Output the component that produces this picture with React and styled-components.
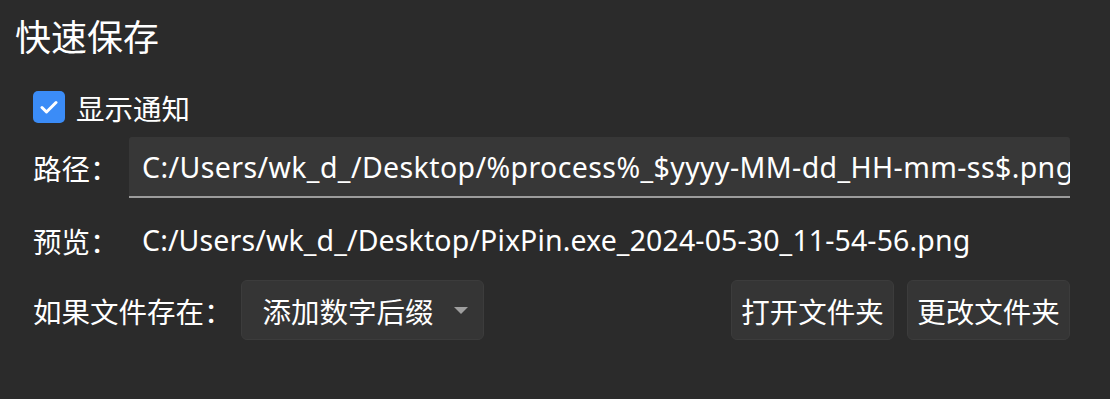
import styled, { createGlobalStyle } from "styled-components";

const GlobalStyle = createGlobalStyle`
  html, body {
    margin: 0;
    background: #2b2b2b;
  }
  body {
    font-family: "Noto Sans", "Noto Sans CJK SC", sans-serif;
    color: #ffffff;
  }
`;

const Page = styled.div`
  width: 1110px;
  height: 399px;
  padding: 16px 40px 0 15px;
  box-sizing: border-box;
  background: #2b2b2b;
`;

const Title = styled.h1`
  margin: 0;
  font-size: 36px;
  font-weight: 400;
  line-height: 44px;
`;

const Body = styled.div`
  padding-left: 18px;
  display: flex;
  flex-direction: column;
`;

const CheckRow = styled.label`
  display: flex;
  align-items: center;
  gap: 11px;
  margin-top: 31px;
  font-size: 28.5px;
  height: 32px;
`;

const Box = styled.span`
  width: 32px;
  height: 32px;
  border-radius: 5px;
  background: #3b8cf7;
  display: flex;
  align-items: center;
  justify-content: center;
`;

const Row = styled.div`
  display: flex;
  align-items: center;
  margin-top: ${({ $gap }) => $gap}px;
  height: ${({ $h }) => $h}px;
  font-size: 28.5px;
`;

const Label = styled.span`
  width: 96px;
  flex-shrink: 0;
`;

const PathField = styled.div`
  flex: 1;
  min-width: 0;
  height: 61px;
  box-sizing: border-box;
  background: #373737;
  border-bottom: 2px solid #9c9c9c;
  border-radius: 3px 3px 0 0;
  padding: 0 0 0 13px;
  display: flex;
  align-items: center;
  overflow: hidden;
  white-space: nowrap;
  letter-spacing: 0.4px;
`;

const PreviewText = styled.span`
  padding-left: 13px;
  white-space: nowrap;
  letter-spacing: 0.12px;
`;

const Select = styled.div`
  width: 243px;
  height: 60px;
  box-sizing: border-box;
  margin-left: 8px;
  background: #353535;
  border: 1px solid #3c3c3c;
  border-radius: 6px;
  display: flex;
  align-items: center;
  justify-content: space-between;
  padding: 0 15px 0 21px;
`;

const Caret = styled.span`
  width: 0;
  height: 0;
  border-left: 7px solid transparent;
  border-right: 7px solid transparent;
  border-top: 7px solid #9e9e9e;
`;

const Spacer = styled.div`
  flex: 1;
`;

const Button = styled.button`
  height: 60px;
  width: 163px;
  margin-left: ${({ $ml }) => $ml || 0}px;
  background: #353535;
  border: 1px solid #3c3c3c;
  border-radius: 6px;
  color: #ffffff;
  font-family: inherit;
  font-size: 28.5px;
  padding: 0;
`;

export default function App() {
  return (
    <>
      <GlobalStyle />
      <Page>
        <Title>快速保存</Title>
        <Body>
          <CheckRow>
            <Box>
              <svg width="18" height="14" viewBox="0 0 18 14">
                <path d="M2 7.5 L6.5 12 L16 2.5" fill="none" stroke="#fff" strokeWidth="3" strokeLinecap="round" strokeLinejoin="round" />
              </svg>
            </Box>
            显示通知
          </CheckRow>
          <Row $gap={14} $h={61}>
            <Label>路径：</Label>
            <PathField>C:/Users/wk_d_/Desktop/%process%_$yyyy-MM-dd_HH-mm-ss$.png</PathField>
          </Row>
          <Row $gap={20} $h={44}>
            <Label>预览：</Label>
            <PreviewText>C:/Users/wk_d_/Desktop/PixPin.exe_2024-05-30_11-54-56.png</PreviewText>
          </Row>
          <Row $gap={18} $h={60}>
            <span>如果文件存在：</span>
            <Select>
              添加数字后缀
              <Caret />
            </Select>
            <Spacer />
            <Button>打开文件夹</Button>
            <Button $ml={13}>更改文件夹</Button>
          </Row>
        </Body>
      </Page>
    </>
  );
}
